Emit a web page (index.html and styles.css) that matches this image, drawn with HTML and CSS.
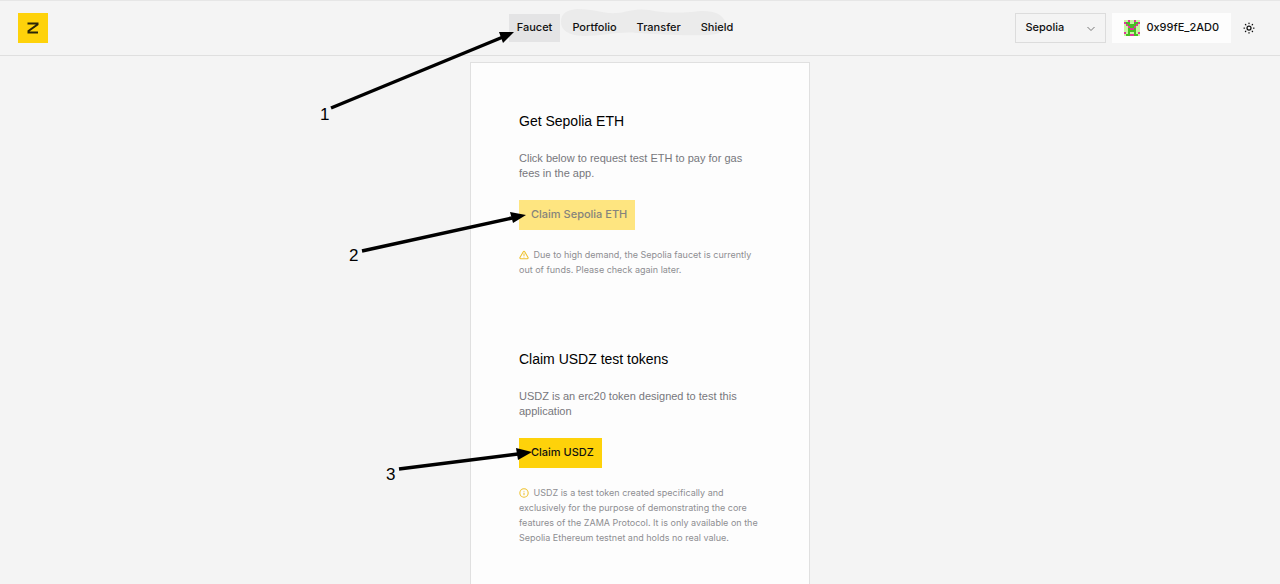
FILE: index.html
```html
<!DOCTYPE html>
<html lang="en">
<head>
    <meta charset="UTF-8">
    <meta name="viewport" content="width=device-width, initial-scale=1">
    <title>Faucet</title>
    <link rel="stylesheet" href="styles.css">
</head>
<body>
    <header class="header">
        <a class="logo" href="#" aria-label="Home">
            <svg width="12" height="12" viewBox="0 0 12 12" fill="none" stroke="#2a2608" stroke-width="2">
                <path d="M0.5 1.5H10.5V2.5L1.5 9V10.5H11"/>
            </svg>
        </a>

        <nav class="nav">
            <svg class="nav-highlight" width="172" height="28" viewBox="0 0 172 28">
                <path d="M0 13C0 4 6 1 16 0C34 0 42 5 56 4C66 3 74 -1 88 1C102 4 116 4 130 3C148 0 160 3 164 12C168 20 160 26 146 26C122 27 94 25 76 24C58 22 44 27 22 27C8 26 0 22 0 13Z" fill="#ebebeb"/>
            </svg>
            <a class="nav-link active" href="#">Faucet</a>
            <a class="nav-link" href="#">Portfolio</a>
            <a class="nav-link" href="#">Transfer</a>
            <a class="nav-link" href="#">Shield</a>
        </nav>

        <div class="actions">
            <div class="network">
                <select class="network-select" aria-label="Network">
                    <option>Sepolia</option>
                </select>
                <svg class="chevron" width="8" height="6" viewBox="0 0 8 6" fill="none" stroke="#777">
                    <path d="M0.5 1L4 4.5L7.5 1"/>
                </svg>
            </div>
            <button class="account" type="button">
                <svg class="avatar" width="16" height="16" viewBox="0 0 8 8" shape-rendering="crispEdges">
                    <path fill="#c5f5a0" d="M0 0h8v8H0z"/>
                    <path fill="#48bd22" d="M1 1h2v1h2V1h2v1H6v5h1v1H5V6H3v2H1V7h1V2H1z"/>
                    <path fill="#e0359a" d="M0 1h1v1H0zM7 1h1v1H7zM2 0h1v1H2zM5 0h1v1H5zM1 2h1v1H1zM6 2h1v1H6zM2 3h1v1H2zM5 3h1v1H5zM3 4h2v1H3zM0 6h1v1H0zM7 6h1v1H7zM3 7h2v1H3z"/>
                </svg>
                0x99fE_2AD0
            </button>
            <button class="theme" type="button" aria-label="Toggle theme">
                <svg width="12" height="12" viewBox="0 0 24 24" fill="none" stroke="#111" stroke-width="2.5" stroke-linecap="round">
                    <circle cx="12" cy="12" r="4"/>
                    <path d="M12 2v1M12 21v1M4.9 4.9l.8.8M18.3 18.3l.8.8M2 12h1M21 12h1M5.7 18.3l-.8.8M19.1 4.9l-.8.8"/>
                </svg>
            </button>
        </div>
    </header>

    <main class="card">
        <section class="section">
            <h2 class="title">Get Sepolia ETH</h2>
            <p class="text">Click below to request test ETH to pay for gas fees in the app.</p>
            <button class="button" type="button" disabled>Claim Sepolia ETH</button>
            <p class="note">
                <svg class="note-icon" width="10" height="10" viewBox="0 0 24 24" fill="none" stroke="#eec12c" stroke-width="2.5" stroke-linecap="round" stroke-linejoin="round">
                    <path d="M21.7 18L13.7 4a2 2 0 0 0-3.4 0L2.3 18A2 2 0 0 0 4 21h16a2 2 0 0 0 1.7-3zM12 9v4M12 17h.01"/>
                </svg>
                Due to high demand, the Sepolia faucet is currently out of funds. Please check again later.
            </p>
        </section>

        <section class="section">
            <h2 class="title">Claim USDZ test tokens</h2>
            <p class="text">USDZ is an erc20 token designed to test this application</p>
            <button class="button" type="button">Claim USDZ</button>
            <p class="note">
                <svg class="note-icon" width="10" height="10" viewBox="0 0 24 24" fill="none" stroke="#eec12c" stroke-width="2.5" stroke-linecap="round">
                    <circle cx="12" cy="12" r="10"/>
                    <path d="M12 16v-4M12 8h.01"/>
                </svg>
                USDZ is a test token created specifically and exclusively for the purpose of demonstrating the core features of the ZAMA Protocol. It is only available on the Sepolia Ethereum testnet and holds no real value.
            </p>
        </section>
    </main>

    <!-- numbered steps, drawn over the page and centred with the card -->
    <svg class="steps" width="640" height="500" viewBox="320 0 640 500">
        <g stroke="#000" stroke-width="3.5">
            <path d="M331 108L503 37"/>
            <path d="M362 251L512 218"/>
            <path d="M399 469L518 454"/>
        </g>
        <path d="M514 32L499 32L503 43Z"/>
        <path d="M526 215L510 212L513 223Z"/>
        <path d="M532 452L516 448L518 460Z"/>
        <text x="320" y="120">1</text>
        <text x="349" y="261">2</text>
        <text x="386" y="480">3</text>
    </svg>
</body>
</html>
```
FILE: styles.css
```css
* {
    box-sizing: border-box;
}
body {
    margin: 0;
    min-height: 100vh;
    display: flex;
    flex-direction: column;
    align-items: center;
    background: #f4f4f4;
    color: #111;
    font-family: Inter, "Liberation Sans", sans-serif;
    font-size: 11px;
}
button, select {
    font: inherit;
    color: inherit;
    border: none;
    border-radius: 0;
    cursor: pointer;
}
.header {
    width: 100%;
    height: 56px;
    padding: 0 18px;
    display: grid;
    grid-template-columns: 1fr auto 1fr;
    align-items: center;
    border-top: 1px solid #e6e6e6;
    border-bottom: 1px solid #dfdfdf;
}
.logo {
    width: 30px;
    height: 30px;
    display: flex;
    align-items: center;
    justify-content: center;
    background: #fed20a;
}
.nav {
    position: relative;
    display: flex;
    gap: 4px;
    margin-right: 30px;
}
.nav-highlight {
    position: absolute;
    left: 52px;
    top: -5px;
}
.nav-link {
    position: relative;
    padding: 0 8px 2px;
    line-height: 26px;
    font-weight: 500;
    color: inherit;
    text-decoration: none;
}
.active {
    background: #e4e4e5;
}
.actions {
    display: flex;
    align-items: center;
    justify-content: flex-end;
    gap: 6px;
}
.network {
    position: relative;
}
.network-select {
    appearance: none;
    width: 91px;
    height: 30px;
    padding: 0 9px 2px;
    background: transparent;
    border: 1px solid #dcdcdc;
    font-weight: 500;
}
.chevron {
    position: absolute;
    right: 11px;
    top: 13px;
    pointer-events: none;
}
.account {
    height: 30px;
    padding: 0 12px 2px;
    display: flex;
    align-items: center;
    gap: 6px;
    background: #fdfdfd;
    font-weight: 500;
}
.avatar {
    margin-top: 2px;
}
.theme {
    padding: 0 7px 0 6px;
    display: flex;
    background: none;
}
.card {
    flex: 1;
    width: 340px;
    max-width: 100%;
    margin-top: 6px;
    padding: 48px;
    background: #fdfdfd;
    border: 1px solid #e0e0e0;
    border-bottom: none;
}
.section {
    margin-bottom: 72px;
}
.section:last-child {
    margin-bottom: 0;
}
.title {
    margin: 0 0 20px;
    font-family: "Liberation Sans", Arial, sans-serif;
    font-size: 14px;
    line-height: 20px;
    font-weight: 400;
    color: #000;
}
.text {
    margin: 0 0 19px;
    font-family: "Liberation Sans", Arial, sans-serif;
    line-height: 15px;
    color: #77777c;
}
.button {
    height: 30px;
    padding: 0 8px 3px 12px;
    background: #fed20a;
    font-weight: 500;
}
.button:disabled {
    background: #fee580;
    color: #85847c;
    cursor: default;
}
.note {
    margin: 17px 0 0;
    font-size: 9px;
    line-height: 15px;
    color: #8e8e92;
}
.note-icon {
    margin-right: 2px;
    vertical-align: -2px;
}
.steps {
    position: absolute;
    top: 0;
    left: 50%;
    margin-left: -320px;
    pointer-events: none;
    font-family: "Liberation Sans", Arial, sans-serif;
    font-size: 17px;
}
```
